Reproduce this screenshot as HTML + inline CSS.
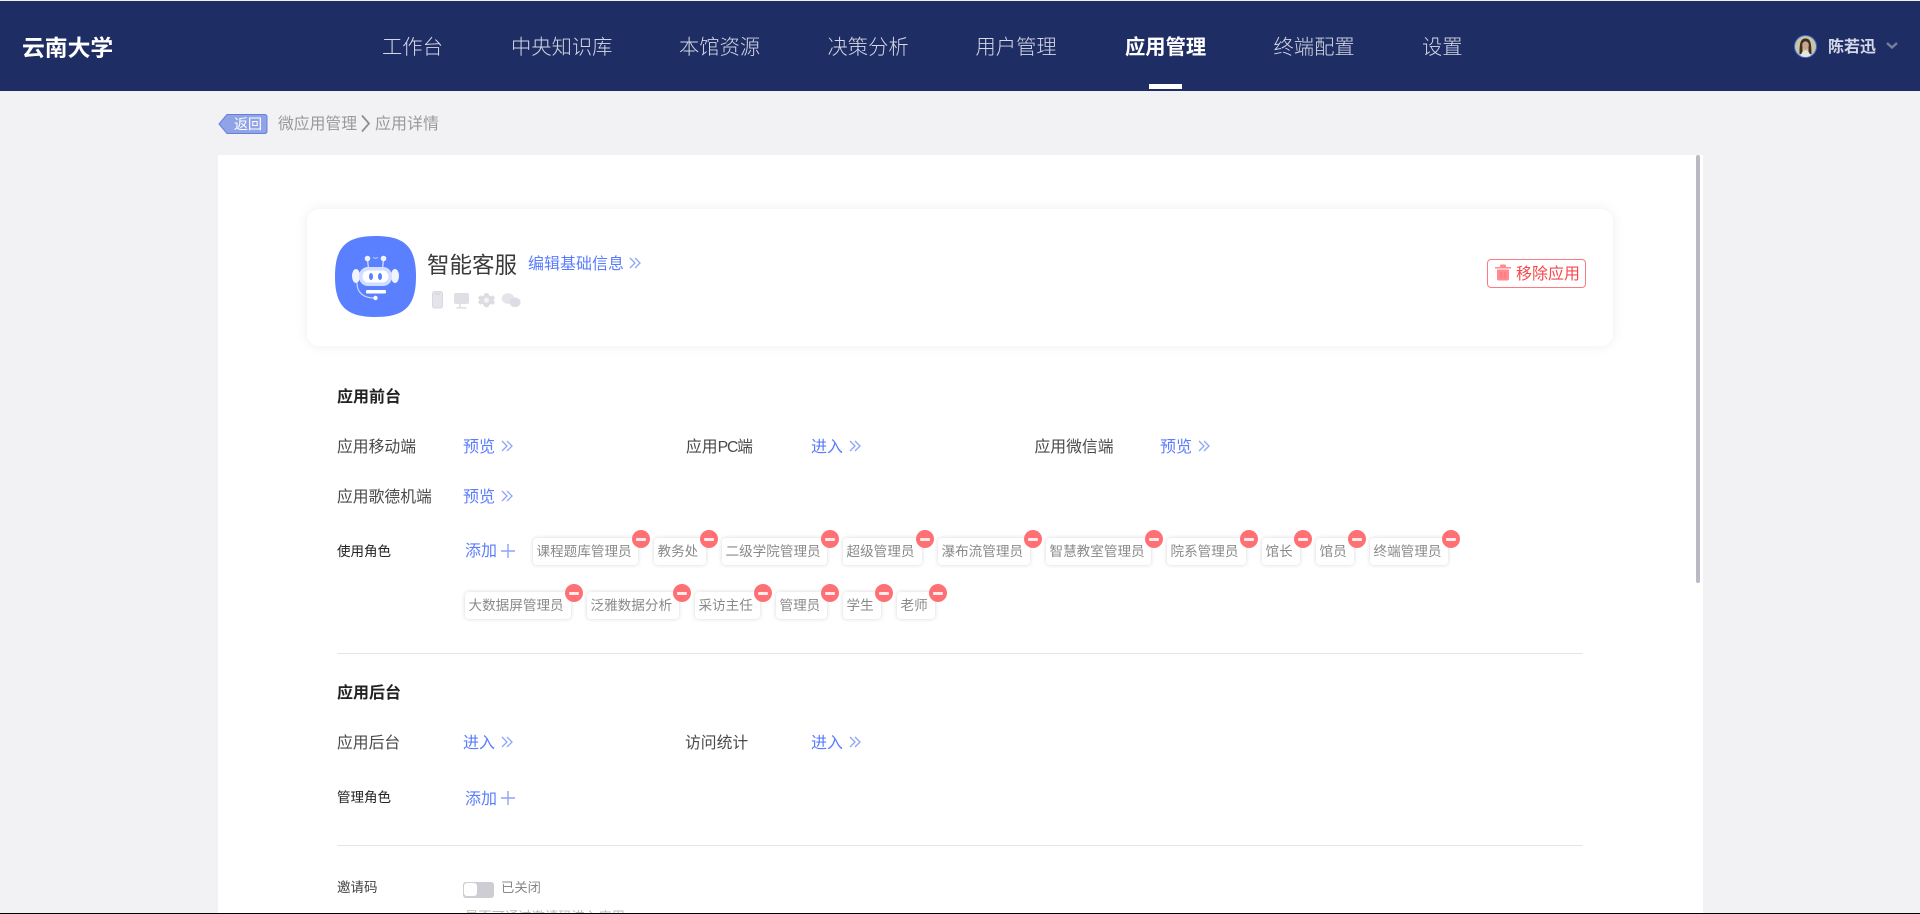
<!DOCTYPE html>
<html lang="zh-CN">
<head>
<meta charset="utf-8">
<title>应用详情</title>
<style>
html,body{margin:0;padding:0;width:1920px;height:914px;overflow:hidden;background:#f2f2f5;}
body{position:relative;font-family:"Liberation Sans","Noto Sans CJK SC",sans-serif;color:#444;}
.a{position:absolute;white-space:nowrap;}
.t{position:absolute;white-space:nowrap;line-height:20px;height:20px;font-size:16px;}
#top{left:0;top:1px;width:1920px;height:90px;background:#1e2d64;position:absolute;}
.n{font-size:20.3px;color:#d5d8e6;line-height:30px;height:30px;top:33px;font-weight:300;}
.l{color:#4a4a4a;font-size:15.8px;}
.b{color:#5b7cff;}
.h{font-weight:700;color:#222;}
.s{font-size:13.5px;color:#222;}
.tag{position:absolute;height:27px;line-height:28px;font-size:13.6px;color:#8a8a8a;text-align:left;padding-left:3.5px;box-sizing:border-box;background:#fff;border-radius:4px;box-shadow:0 0 4px rgba(0,0,0,.16);white-space:nowrap;}
.tag i{position:absolute;right:-12px;top:-8px;width:18px;height:18px;border-radius:50%;background:#ff7074;}
.tag i:after{content:"";position:absolute;left:4px;top:7.5px;width:10px;height:3px;border-radius:1px;background:#ffe9e9;}
.dv{position:absolute;left:337px;width:1246px;height:1px;background:#e4e4e6;}
.ch{position:absolute;width:12px;height:12px;}
</style>
</head>
<body>
<div id="top"></div>
<div class="a" style="left:22px;top:31px;line-height:34px;font-size:22.8px;font-weight:700;color:#fff;">云南大学</div>
<div class="a n" style="left:382px;">工作台</div>
<div class="a n" style="left:511px;">中央知识库</div>
<div class="a n" style="left:679px;">本馆资源</div>
<div class="a n" style="left:827.500px;">决策分析</div>
<div class="a n" style="left:975.500px;">用户管理</div>
<div class="a n" style="left:1125px;color:#fff;font-weight:700;">应用管理</div>
<div class="a n" style="left:1273.500px;">终端配置</div>
<div class="a n" style="left:1422px;">设置</div>
<div class="a" style="left:1149px;top:84px;width:33px;height:5px;background:#fff;"></div>

<svg class="a" style="left:1794px;top:35px;" width="23" height="23" viewBox="0 0 23 23">
<circle cx="11.5" cy="11.5" r="11" fill="#c9c6a4" stroke="#3f6bd8" stroke-width="1"/>
<path d="M5.500 19 C5.500 8 6.500 3.500 11.500 3.500 C16.500 3.500 17.500 8 17.500 19 L14.500 19 L14.500 8 L8.500 8 L8.500 19Z" fill="#3d2f24"/>
<ellipse cx="11.500" cy="10.500" rx="3.300" ry="4.300" fill="#c9a58c"/>
<path d="M6.500 21 C7.500 17 9.500 15.500 11.500 15.500 C13.500 15.500 15.500 17 16.500 21 Q11.500 23 6.500 21Z" fill="#e8e6dc"/>
</svg>
<div class="a" style="left:1828px;top:35px;line-height:26px;font-size:16px;font-weight:700;color:#d5d9e8;">陈若迅</div>
<svg class="a" style="left:1886px;top:42px;" width="12" height="7" viewBox="0 0 12 7"><path d="M1 1 L6 5.500 L11 1" fill="none" stroke="#767f9f" stroke-width="2.400"/></svg>

<svg class="a" style="left:218px;top:113px;" width="50" height="22" viewBox="0 0 50 22">
<path d="M1 11 L9 1.500 H46.500 Q49 1.500 49 4 V18 Q49 20.500 46.500 20.500 H9 Z" fill="#8fa3e6" stroke="#6480de" stroke-width="1"/>
</svg>
<div class="a" style="left:234px;top:113px;line-height:22px;font-size:14px;color:#fff;">返回</div>
<div class="t" style="left:278px;top:115px;font-size:15.8px;color:#999;">微应用管理</div>
<svg class="a" style="left:360px;top:114px;" width="11" height="19" viewBox="0 0 11 19"><path d="M2 1.500 L9 9.500 L2 17.500" fill="none" stroke="#8e8e8e" stroke-width="1.800"/></svg>
<div class="t" style="left:375px;top:115px;color:#999;">应用详情</div>

<div class="a" style="left:218px;top:155px;width:1485px;height:759px;background:#fff;"></div>
<div class="a" style="left:1696px;top:155px;width:4px;height:428px;background:#b9bac3;border-radius:2px;"></div>

<div class="a" style="left:307px;top:209px;width:1306px;height:137px;background:#fff;border-radius:12px;box-shadow:0 0 12px rgba(0,0,0,.07);"></div>
<svg class="a" style="left:335px;top:236px;" width="81" height="81" viewBox="0 0 81 81">
<path d="M40.500 0 C70 0 81 11 81 40.500 C81 70 70 81 40.500 81 C11 81 0 70 0 40.500 C0 11 11 0 40.500 0Z" fill="#5b80ff"/>
<path d="M32.500 23 L33.500 33 M48.500 23 L47.500 33" stroke="#dfe6ff" stroke-width="1.200"/>
<circle cx="32.500" cy="22.500" r="2.800" fill="#eef2ff"/>
<circle cx="48.500" cy="22.500" r="2.800" fill="#eef2ff"/>
<path d="M38 21.500 Q40.500 23 43 21.500" stroke="#c9d5ff" stroke-width="1" fill="none"/>
<ellipse cx="21" cy="40" rx="4" ry="7" fill="#f1f4ff"/>
<ellipse cx="60" cy="40" rx="4" ry="7" fill="#f1f4ff"/>
<rect x="24" y="31" width="33" height="19" rx="9" fill="#d3ddff"/>
<rect x="27.500" y="34.500" width="26" height="12" rx="6" fill="#fff"/>
<ellipse cx="36" cy="40.500" rx="2" ry="3.500" fill="#5b80ff"/>
<ellipse cx="45" cy="40.500" rx="2" ry="3.500" fill="#5b80ff"/>
<rect x="31" y="54" width="20" height="3.500" rx="1" fill="#fff"/>
<path d="M22 47 C22 57 29 62 39 62" fill="none" stroke="#c7d4ff" stroke-width="1.200"/>
<circle cx="40.500" cy="62" r="2.200" fill="#fff"/>
</svg>
<div class="a" style="left:427px;top:250px;line-height:32px;font-size:22.500px;color:#3a3a3a;">智能客服</div>
<div class="t b" style="left:528px;top:255px;">编辑基础信息</div>
<svg class="ch" style="left:629px;top:257px;" viewBox="0 0 12 12"><path d="M1 1 L6 6 L1 11 M6 1 L11 6 L6 11" fill="none" stroke="#8ea4f5" stroke-width="1.300"/></svg>

<svg class="a" style="left:430px;top:290px;" width="92" height="19" viewBox="0 0 92 19">
<rect x="2.500" y="1.500" width="10" height="16.500" rx="2.200" fill="#e4e4ea" stroke="#d8d8df" stroke-width="1"/>
<path d="M5 4 H10" stroke="#cfcfd7" stroke-width="1"/>
<rect x="24" y="3" width="15" height="11" rx="2" fill="#dfdfe5"/>
<path d="M30 14 V17 M26.500 17.800 H36.500" stroke="#dfdfe5" stroke-width="1.600"/>
<g transform="translate(56.500 10.300) scale(.9) translate(-58.500 -10.300)">
<path d="M56.500 2.500 L60.500 2.500 L61.500 5 L64 6 L65.500 4.500 L68 7.500 L66.500 9.500 L66.500 11 L68 12.500 L65.500 15.500 L64 14 L61.500 15.500 L60.500 18 L56.500 18 L55.500 15.500 L53 14 L51.500 15.500 L49 12.500 L50.500 11 L50.500 9.500 L49 7.500 L51.500 4.500 L53 6 L55.500 5 Z" fill="#dcdce2"/>
<circle cx="58.500" cy="10.300" r="2.800" fill="#f4f4f6"/>
</g>
<ellipse cx="78" cy="8.500" rx="6.300" ry="5.300" fill="#e4e4e9"/>
<ellipse cx="85" cy="12.300" rx="5.500" ry="4.800" fill="#dcdce2"/>
</svg>

<div class="a" style="left:1487px;top:259px;width:97px;height:27px;border:1px solid #ff7a7e;border-radius:4px;"></div>
<svg class="a" style="left:1495px;top:264px;" width="16" height="17" viewBox="0 0 16 17">
<path d="M0 3 H16 V4.500 H0Z M5 2 Q5 .500 6.500 .500 H9.500 Q11 .500 11 2 V3 H5Z" fill="#ff8a8f"/>
<path d="M2 5.500 H14 V14.500 Q14 16.500 12 16.500 H4 Q2 16.500 2 14.500Z" fill="#ff8a8f"/>
<path d="M6 8 V14 M10 8 V14" stroke="#ff6f75" stroke-width="1"/>
</svg>
<div class="t" style="left:1516px;top:265px;color:#f5484c;">移除应用</div>

<div class="t h" style="left:337px;top:388px;">应用前台</div>

<div class="t l" style="left:337px;top:438px;">应用移动端</div>
<div class="t b" style="left:463px;top:438px;">预览</div>
<svg class="ch" style="left:500.500px;top:440px;" viewBox="0 0 12 12"><path d="M1 1 L6 6 L1 11 M6 1 L11 6 L6 11" fill="none" stroke="#8ea4f5" stroke-width="1.300"/></svg>
<div class="t l" style="left:686px;top:438px;">应用<span style="letter-spacing:-1.200px;">PC</span>端</div>
<div class="t b" style="left:811px;top:438px;">进入</div>
<svg class="ch" style="left:848.500px;top:440px;" viewBox="0 0 12 12"><path d="M1 1 L6 6 L1 11 M6 1 L11 6 L6 11" fill="none" stroke="#8ea4f5" stroke-width="1.300"/></svg>
<div class="t l" style="left:1034.500px;top:438px;">应用微信端</div>
<div class="t b" style="left:1160px;top:438px;">预览</div>
<svg class="ch" style="left:1197.500px;top:440px;" viewBox="0 0 12 12"><path d="M1 1 L6 6 L1 11 M6 1 L11 6 L6 11" fill="none" stroke="#8ea4f5" stroke-width="1.300"/></svg>

<div class="t l" style="left:337px;top:488px;">应用歌德机端</div>
<div class="t b" style="left:463px;top:488px;">预览</div>
<svg class="ch" style="left:500.500px;top:490px;" viewBox="0 0 12 12"><path d="M1 1 L6 6 L1 11 M6 1 L11 6 L6 11" fill="none" stroke="#8ea4f5" stroke-width="1.300"/></svg>

<div class="t s" style="left:337px;top:542px;">使用角色</div>
<div class="t b" style="left:465px;top:542px;">添加</div>
<svg class="a" style="left:501px;top:544px;" width="14" height="14" viewBox="0 0 14 14"><path d="M7 0 V14 M0 7 H14" stroke="#8ea4f5" stroke-width="1.400"/></svg>

<div class="tag" style="left:533px;top:538px;width:105px;">课程题库管理员<i></i></div>
<div class="tag" style="left:654px;top:538px;width:52px;">教务处<i></i></div>
<div class="tag" style="left:722px;top:538px;width:105px;">二级学院管理员<i></i></div>
<div class="tag" style="left:843px;top:538px;width:79px;">超级管理员<i></i></div>
<div class="tag" style="left:938px;top:538px;width:92px;">瀑布流管理员<i></i></div>
<div class="tag" style="left:1046px;top:538px;width:105px;">智慧教室管理员<i></i></div>
<div class="tag" style="left:1167px;top:538px;width:79px;">院系管理员<i></i></div>
<div class="tag" style="left:1262px;top:538px;width:38px;">馆长<i></i></div>
<div class="tag" style="left:1316px;top:538px;width:38px;">馆员<i></i></div>
<div class="tag" style="left:1370px;top:538px;width:78px;">终端管理员<i></i></div>

<div class="tag" style="left:465px;top:592px;width:106px;">大数据屏管理员<i></i></div>
<div class="tag" style="left:587px;top:592px;width:92px;">泛雅数据分析<i></i></div>
<div class="tag" style="left:695px;top:592px;width:65px;">采访主任<i></i></div>
<div class="tag" style="left:776px;top:592px;width:51px;">管理员<i></i></div>
<div class="tag" style="left:843px;top:592px;width:38px;">学生<i></i></div>
<div class="tag" style="left:897px;top:592px;width:38px;">老师<i></i></div>

<div class="dv" style="top:653px;"></div>

<div class="t h" style="left:337px;top:684px;">应用后台</div>
<div class="t l" style="left:337px;top:734px;">应用后台</div>
<div class="t b" style="left:463px;top:734px;">进入</div>
<svg class="ch" style="left:500.500px;top:736px;" viewBox="0 0 12 12"><path d="M1 1 L6 6 L1 11 M6 1 L11 6 L6 11" fill="none" stroke="#8ea4f5" stroke-width="1.300"/></svg>
<div class="t l" style="left:685px;top:734px;">访问统计</div>
<div class="t b" style="left:811px;top:734px;">进入</div>
<svg class="ch" style="left:848.500px;top:736px;" viewBox="0 0 12 12"><path d="M1 1 L6 6 L1 11 M6 1 L11 6 L6 11" fill="none" stroke="#8ea4f5" stroke-width="1.300"/></svg>

<div class="t s" style="left:337px;top:788px;">管理角色</div>
<div class="t b" style="left:465px;top:790px;">添加</div>
<svg class="a" style="left:501px;top:791px;" width="14" height="14" viewBox="0 0 14 14"><path d="M7 0 V14 M0 7 H14" stroke="#8ea4f5" stroke-width="1.400"/></svg>

<div class="dv" style="top:845px;"></div>

<div class="t s" style="left:337px;top:878px;color:#444;">邀请码</div>
<div class="a" style="left:463px;top:882px;width:31px;height:16px;background:#cdcdd3;border-radius:3px;"></div>
<div class="a" style="left:464px;top:883px;width:13px;height:13px;background:#fff;border-radius:3px;"></div>
<div class="t" style="left:501px;top:878px;font-size:13.330px;color:#888;">已关闭</div>
<div class="t" style="left:465px;top:907px;font-size:13.330px;color:#bbb;">是否可通过邀请码进入应用</div>
<div class="a" style="left:0;top:913px;width:1920px;height:1px;background:#000;"></div>
</body>
</html>
